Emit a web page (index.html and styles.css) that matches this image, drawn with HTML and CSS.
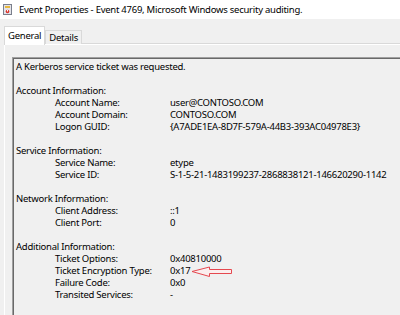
FILE: index.html
```html
<!DOCTYPE html>
<html lang="en">
<head>
  <meta charset="utf-8" />
  <title>Event Properties</title>
  <link rel="stylesheet" href="styles.css">
</head>
<body>
  <div class="titlebar">
    <svg class="app-icon" width="9" height="11" viewBox="0 0 9 11">
      <rect x="0.5" y="0.5" width="8" height="10" fill="#e4e4ea" stroke="#7a7f8c"/>
      <rect x="2" y="2" width="5" height="2" fill="#e8b93e"/>
      <circle cx="4.5" cy="7.5" r="1.8" fill="#d9342b"/>
      <rect x="4" y="6" width="1" height="1.5" fill="#fff"/>
    </svg>
    <span class="title-text">Event Properties - Event 4769, Microsoft Windows security auditing.</span>
  </div>

  <div class="dialog">
    <div class="tabs">
      <div class="tab active">General</div>
      <div class="tab">Details</div>
    </div>

    <div class="panel">
      <div class="event-text">
        <p>A Kerberos service ticket was requested.</p>

        <div class="section">
          <p>Account Information:</p>
          <div class="row"><span>Account Name:</span><span>user@CONTOSO.COM</span></div>
          <div class="row"><span>Account Domain:</span><span>CONTOSO.COM</span></div>
          <div class="row"><span>Logon GUID:</span><span>{A7ADE1EA-8D7F-579A-44B3-393AC04978E3}</span></div>
        </div>

        <div class="section">
          <p>Service Information:</p>
          <div class="row"><span>Service Name:</span><span>etype</span></div>
          <div class="row"><span>Service ID:</span><span>S-1-5-21-1483199237-2868838121-146620290-1142</span></div>
        </div>

        <div class="section">
          <p>Network Information:</p>
          <div class="row"><span>Client Address:</span><span>::1</span></div>
          <div class="row"><span>Client Port:</span><span>0</span></div>
        </div>

        <div class="section">
          <p>Additional Information:</p>
          <div class="row"><span>Ticket Options:</span><span>0x40810000</span></div>
          <div class="row"><span>Ticket Encryption Type:</span><span>0x17</span></div>
          <div class="row"><span>Failure Code:</span><span>0x0</span></div>
          <div class="row"><span>Transited Services:</span><span>-</span></div>
        </div>
      </div>
    </div>
  </div>

  <!-- annotation arrow pointing at the encryption type -->
  <svg class="callout" width="44" height="12" viewBox="0 0 44 12">
    <polygon points="1,5.5 18.5,1 18.5,3.5 40.5,3.5 40.5,7.5 18.5,7.5 18.5,10.5" fill="#fbeeee" stroke="#e5484f" stroke-width="1"/>
  </svg>
</body>
</html>
```

FILE: styles.css
```css
body {
  margin: 0;
  width: 400px;
  height: 315px;
  overflow: hidden;
  position: relative;
  background-color: #f0f0f0;
  font-family: "Noto Sans", "Open Sans", sans-serif;
  font-size: 9.5px;
  letter-spacing: -0.25px;
  color: #000;
}
.titlebar {
  height: 19px;
  background-color: #fff;
  display: flex;
  align-items: center;
  gap: 7px;
  padding-left: 3px;
}
.app-icon {
  display: block;
}
.dialog {
  width: 440px;
  padding: 7px 0 0 4px;
}
.tabs {
  display: flex;
  align-items: flex-end;
  position: relative;
  z-index: 1;
}
.tab {
  height: 13px;
  padding: 0 3px;
  line-height: 14px;
  background-color: #f0f0f0;
  border: 1px solid #d9d9d9;
  border-bottom: none;
}
.tab.active {
  height: 18px;
  line-height: 17px;
  padding: 0 3px;
  background-color: #fff;
  margin-bottom: -1px;
}
.panel {
  border-top: 1px solid #fff;
  border-left: 1px solid #fff;
  box-shadow: 0 -1px 0 #d9d9d9;
  padding: 12px 0 0 7px;
  height: 300px;
}
.event-text {
  border-top: 1px solid #a0a0a0;
  border-left: 1px solid #a0a0a0;
  box-shadow: inset 1px 1px 0 #696969;
  padding: 3px 0 0 3px;
  height: 300px;
  line-height: 12px;
}
.event-text p {
  margin: 0;
}
.section {
  margin-top: 12px;
}
.row {
  display: grid;
  grid-template-columns: 115px auto;
  padding-left: 39px;
}
.callout {
  position: absolute;
  left: 191px;
  top: 266px;
}
```
